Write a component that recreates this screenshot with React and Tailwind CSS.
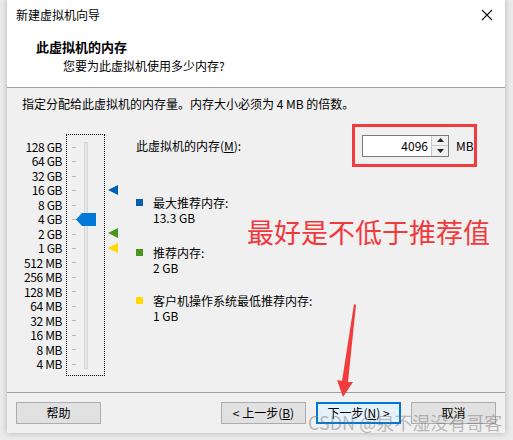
const sizes = ["128 GB", "64 GB", "32 GB", "16 GB", "8 GB", "4 GB", "2 GB", "1 GB", "512 MB", "256 MB", "128 MB", "64 MB", "32 MB", "16 MB", "8 MB", "4 MB"];

const font = { fontFamily: '"Noto Sans CJK SC", "Noto Sans", sans-serif' };

const Marker = ({ color }) => (
    <svg width="10" height="10" viewBox="0 0 10 10">
        <polygon points="0,5 10,0 10,10" fill={color} />
    </svg>
);

const Btn = ({ children, primary }) => (
    <button
        className={
            primary
                ? "w-[85px] h-[22px] bg-[#e5f1fb] border-2 border-[#0078d7] text-[12px] leading-none text-black"
                : "w-[85px] h-[22px] bg-[#e1e1e1] border border-[#adadad] text-[12px] leading-none text-black"
        }
    >
        {children}
    </button>
);

const App = () => {
    return (
        <div className="relative w-[513px] h-[440px] bg-[#ebebeb] overflow-hidden text-black" style={font}>
            <div className="ml-[7px] w-[498px] h-[433px] bg-[#f0f0f0] flex flex-col shadow-[0_0_6px_rgba(0,0,0,0.25)]">
                {/* header */}
                <div className="bg-white h-[87px] flex flex-col">
                    <div className="h-[30px] flex items-center justify-between pl-[9px] pr-[12px]">
                        <span className="text-[12px]">新建虚拟机向导</span>
                        <svg width="12" height="12" viewBox="0 0 12 12">
                            <path d="M1 1 L11 11 M11 1 L1 11" stroke="#111" strokeWidth="1.1" />
                        </svg>
                    </div>
                    <div className="pl-[29px] pt-[8px] text-[13px] font-bold leading-[18px]">此虚拟机的内存</div>
                    <div className="pl-[56px] pt-[2px] text-[12px] leading-[16px]">您要为此虚拟机使用多少内存?</div>
                </div>
                <div className="h-px bg-[#a0a0a0]" />

                {/* body */}
                <div className="flex-1 flex flex-col">
                    <div className="pl-[15px] pt-[8px] text-[12px] leading-[16px]">指定分配给此虚拟机的内存量。内存大小必须为 4 MB 的倍数。</div>
                    <div className="flex mt-[22px]">
                        {/* slider */}
                        <div className="flex">
                            <div className="w-[55px] pt-[6px] flex flex-col items-end text-[12px] tracking-[-0.4px]">
                                {sizes.map((s) => (
                                    <div key={s} className="h-[14.47px] leading-[14.47px]">{s}</div>
                                ))}
                            </div>
                            <div className="relative ml-[4px] w-[39px] h-[242px] border border-dotted border-black">
                                <div className="absolute left-[5px] top-[5px] flex flex-col">
                                    {sizes.map((s) => (
                                        <div key={s} className="h-[14.47px] flex items-center">
                                            <div className="w-[4px] h-px bg-[#b8b8b8]" />
                                        </div>
                                    ))}
                                </div>
                                <div className="absolute left-[17px] top-[7px] w-[4px] h-[227px] bg-[#e7e7e7] border border-[#d6d6d6]" />
                                <svg className="absolute left-[9px] top-[78px]" width="20" height="13" viewBox="0 0 20 13">
                                    <polygon points="0,6.5 6,0 20,0 20,13 6,13" fill="#0078d7" />
                                </svg>
                            </div>
                            <div className="relative w-[20px]">
                                <div className="absolute left-[3px] top-[51px]"><Marker color="#005fb0" /></div>
                                <div className="absolute left-[3px] top-[94px]"><Marker color="#4a961b" /></div>
                                <div className="absolute left-[3px] top-[109px]"><Marker color="#ffd800" /></div>
                            </div>
                        </div>

                        {/* info */}
                        <div className="flex-1 flex flex-col pl-[11px]">
                            <div className="flex items-center -mt-[10px] h-[43px]">
                                <span className="text-[12px] w-[216px]">
                                    此虚拟机的内存(<span className="underline">M</span>):
                                </span>
                                <div className="flex items-center h-[43px] w-[125px] border-[3px] border-[#f03c3c] pl-[7px]">
                                    <div className="flex h-[22px] border border-[#7a7a7a] bg-white">
                                        <div className="w-[68px] text-right pr-[3px] text-[12px] leading-[20px]">4096</div>
                                        <div className="w-[17px] flex flex-col border-l border-[#c8c8c8] bg-[#f0f0f0]">
                                            <div className="flex-1 flex items-center justify-center border-b border-[#c8c8c8]">
                                                <svg width="7" height="4" viewBox="0 0 7 4"><polygon points="0,4 3.5,0 7,4" fill="#222" /></svg>
                                            </div>
                                            <div className="flex-1 flex items-center justify-center">
                                                <svg width="7" height="4" viewBox="0 0 7 4"><polygon points="0,0 3.5,4 7,0" fill="#222" /></svg>
                                            </div>
                                        </div>
                                    </div>
                                    <span className="ml-[7px] text-[12px]">MB</span>
                                </div>
                            </div>

                            <div className="relative mt-[28px] flex flex-col text-[12px] leading-[15px]">
                                <div className="flex gap-[10px]">
                                    <div className="w-[7px] h-[7px] mt-[4px] bg-[#005fb0]" />
                                    <div>
                                        <div>最大推荐内存:</div>
                                        <div>13.3 GB</div>
                                    </div>
                                </div>
                                <div className="flex gap-[10px] mt-[20px]">
                                    <div className="w-[7px] h-[7px] mt-[4px] bg-[#4a961b]" />
                                    <div>
                                        <div>推荐内存:</div>
                                        <div>2 GB</div>
                                    </div>
                                </div>
                                <div className="flex gap-[10px] mt-[18px]">
                                    <div className="w-[7px] h-[7px] mt-[4px] bg-[#ffd800]" />
                                    <div>
                                        <div>客户机操作系统最低推荐内存:</div>
                                        <div>1 GB</div>
                                    </div>
                                </div>
                            </div>
                        </div>
                    </div>
                </div>

                {/* footer */}
                <div className="h-px bg-[#a0a0a0]" />
                <div className="h-[40px] flex items-center pl-[9px] pr-[9px]">
                    <Btn>帮助</Btn>
                    <div className="flex-1" />
                    <div className="flex gap-[10px]">
                        <Btn>&lt; 上一步(<span className="underline">B</span>)</Btn>
                        <Btn primary>下一步(<span className="underline">N</span>) &gt;</Btn>
                        <Btn>取消</Btn>
                    </div>
                </div>
            </div>

            {/* annotations */}
            <div className="absolute left-[247px] top-[214px] text-[27px] leading-[36px] text-[#f0393d] whitespace-nowrap">最好是不低于推荐值</div>
            <svg className="absolute left-[330px] top-[300px]" width="30" height="100" viewBox="0 0 30 100">
                <polygon points="24,4 26,5 18,82 23,82 13,97 7,80 12,81" fill="#f03c3c" />
            </svg>
            <div className="absolute left-[308px] top-[410px] text-[18px] leading-[24px] text-[rgba(110,110,110,0.45)] whitespace-nowrap">CSDN @泉不湿没有哥客</div>
        </div>
    );
};

export default App;
